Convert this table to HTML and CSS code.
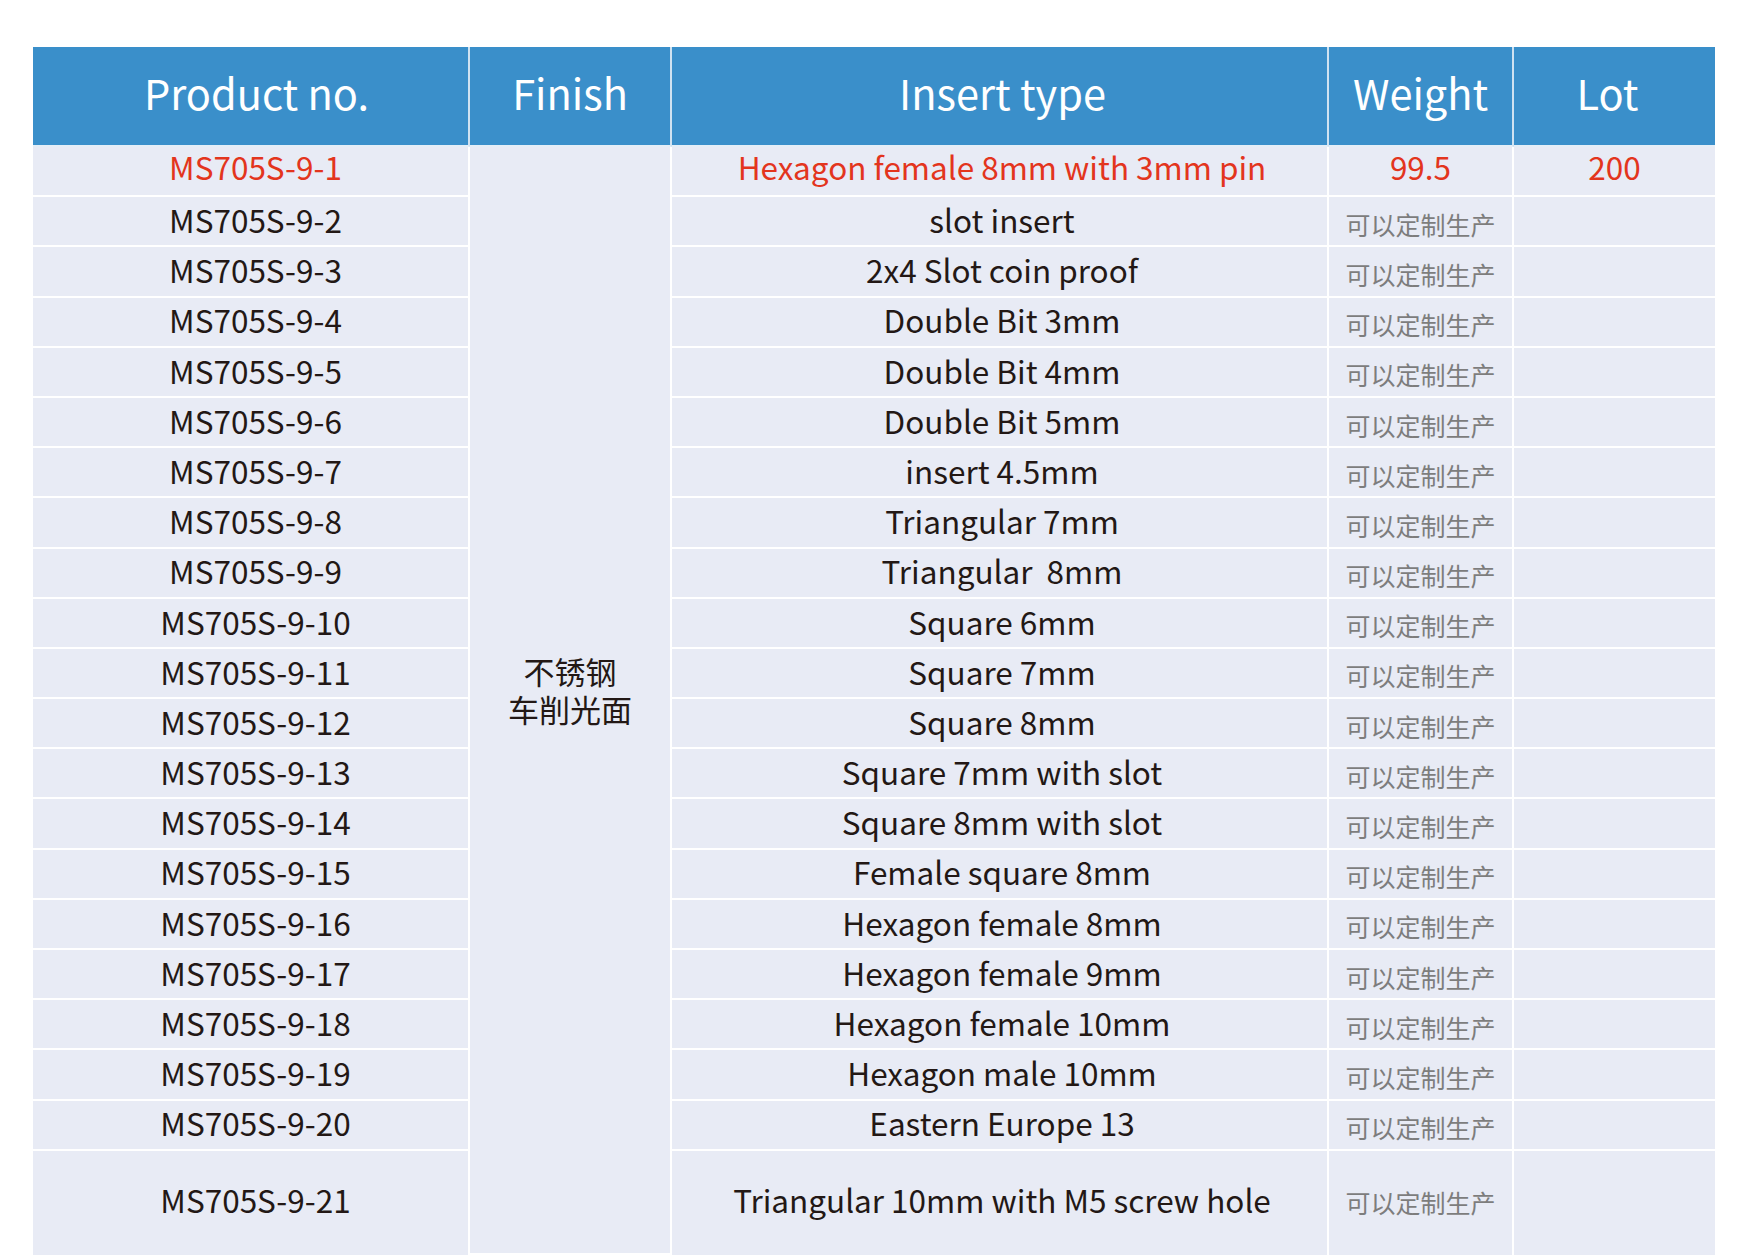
FILE: index.html
```html
<!DOCTYPE html>
<html lang="zh">
<head>
<meta charset="utf-8">
<title>Product table</title>
<link rel="stylesheet" href="styles.css">
</head>
<body>
<table class="spec">
  <colgroup>
    <col class="c-no"><col class="c-finish"><col class="c-type"><col class="c-weight"><col class="c-lot">
  </colgroup>
  <thead>
    <tr class="head">
      <th class="no">Product no.</th><th>Finish</th><th class="type">Insert type</th><th>Weight</th><th class="last lot">Lot</th>
    </tr>
  </thead>
  <tbody>
    <tr class="hl">
      <td class="no">MS705S-9-1</td>
      <td class="finish" rowspan="21"><div>不锈钢</div><div>车削光面</div></td>
      <td class="type">Hexagon female 8mm with 3mm pin</td><td>99.5</td><td class="last">200</td>
    </tr>
    <tr><td class="no">MS705S-9-2</td><td class="type">slot insert</td><td class="cn">可以定制生产</td><td class="last"></td></tr>
    <tr><td class="no">MS705S-9-3</td><td class="type">2x4 Slot coin proof</td><td class="cn">可以定制生产</td><td class="last"></td></tr>
    <tr><td class="no">MS705S-9-4</td><td class="type">Double Bit 3mm</td><td class="cn">可以定制生产</td><td class="last"></td></tr>
    <tr><td class="no">MS705S-9-5</td><td class="type">Double Bit 4mm</td><td class="cn">可以定制生产</td><td class="last"></td></tr>
    <tr><td class="no">MS705S-9-6</td><td class="type">Double Bit 5mm</td><td class="cn">可以定制生产</td><td class="last"></td></tr>
    <tr><td class="no">MS705S-9-7</td><td class="type">insert 4.5mm</td><td class="cn">可以定制生产</td><td class="last"></td></tr>
    <tr><td class="no">MS705S-9-8</td><td class="type">Triangular 7mm</td><td class="cn">可以定制生产</td><td class="last"></td></tr>
    <tr><td class="no">MS705S-9-9</td><td class="type">Triangular&nbsp; 8mm</td><td class="cn">可以定制生产</td><td class="last"></td></tr>
    <tr><td class="no">MS705S-9-10</td><td class="type">Square 6mm</td><td class="cn">可以定制生产</td><td class="last"></td></tr>
    <tr><td class="no">MS705S-9-11</td><td class="type">Square 7mm</td><td class="cn">可以定制生产</td><td class="last"></td></tr>
    <tr><td class="no">MS705S-9-12</td><td class="type">Square 8mm</td><td class="cn">可以定制生产</td><td class="last"></td></tr>
    <tr><td class="no">MS705S-9-13</td><td class="type">Square 7mm with slot</td><td class="cn">可以定制生产</td><td class="last"></td></tr>
    <tr><td class="no">MS705S-9-14</td><td class="type">Square 8mm with slot</td><td class="cn">可以定制生产</td><td class="last"></td></tr>
    <tr><td class="no">MS705S-9-15</td><td class="type">Female square 8mm</td><td class="cn">可以定制生产</td><td class="last"></td></tr>
    <tr><td class="no">MS705S-9-16</td><td class="type">Hexagon female 8mm</td><td class="cn">可以定制生产</td><td class="last"></td></tr>
    <tr><td class="no">MS705S-9-17</td><td class="type">Hexagon female 9mm</td><td class="cn">可以定制生产</td><td class="last"></td></tr>
    <tr><td class="no">MS705S-9-18</td><td class="type">Hexagon female 10mm</td><td class="cn">可以定制生产</td><td class="last"></td></tr>
    <tr><td class="no">MS705S-9-19</td><td class="type">Hexagon male 10mm</td><td class="cn">可以定制生产</td><td class="last"></td></tr>
    <tr><td class="no">MS705S-9-20</td><td class="type">Eastern Europe 13</td><td class="cn">可以定制生产</td><td class="last"></td></tr>
    <tr class="tall"><td class="no">MS705S-9-21</td><td class="type">Triangular 10mm with M5 screw hole</td><td class="cn">可以定制生产</td><td class="last"></td></tr>
  </tbody>
</table>
</body>
</html>
```
FILE: styles.css
```css
html, body {
  margin: 0;
  padding: 0;
  background: #ffffff;
}
body {
  padding: 47px 34px 0 33px;
  font-family: "Noto Sans CJK SC", "Noto Sans", sans-serif;
}
.spec {
  width: 1682px;
  table-layout: fixed;
  border-collapse: separate;
  border-spacing: 0;
}
.c-no { width: 437px; }
.c-finish { width: 202px; }
.c-type { width: 657px; }
.c-weight { width: 185px; }
.c-lot { width: 201px; }

.spec th, .spec td {
  padding: 0;
  text-align: center;
  vertical-align: middle;
  border-right: 2px solid #ffffff;
  border-bottom: 2px solid #ffffff;
  white-space: nowrap;
}
.spec .last { border-right: none; }

.head { height: 100px; }
.spec th {
  background: #3a8fca;
  color: #ffffff;
  font-weight: 400;
  font-size: 41.5px;
  line-height: 1;
  padding-bottom: 6px;
  border-right-color: #cfe2f1;
  border-bottom-color: #e4eef7;
}
.spec th.no { padding-left: 12px; }
.spec th.type { padding-left: 6px; }
.spec th.lot { padding-right: 14px; }

.spec td {
  background: #e8ebf5;
  color: #231815;
  font-size: 31.5px;
  line-height: 1;
  padding-bottom: 3px;
}
.spec td.no { padding-left: 10px; }
.spec td.type { padding-left: 5px; }

.spec tbody tr { height: 50.2px; }
.spec tbody tr.tall { height: 104px; }
.spec tbody tr.tall td { border-bottom: none; padding-bottom: 7px; }

.spec tr.hl td { color: #e3351d; padding-bottom: 9px; }

.spec td.cn {
  color: #7d7d7d;
  font-size: 25px;
  padding-top: 6px;
  padding-bottom: 0;
}
.spec tr.tall td.cn { padding-top: 6px; padding-bottom: 6px; }
.spec tr.hl td.finish {
  color: #231815;
  font-size: 31px;
  line-height: 38px;
  padding-bottom: 20px;
}
```
